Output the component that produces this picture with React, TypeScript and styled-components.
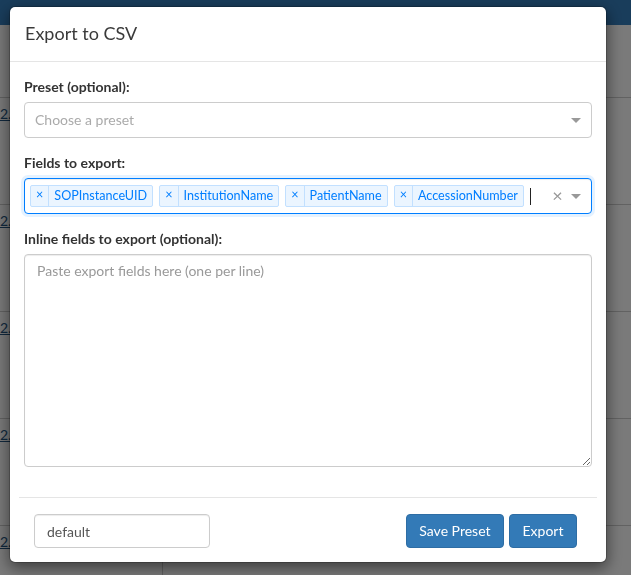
import React from "react";
import styled, { createGlobalStyle } from "styled-components";

const GlobalStyle = createGlobalStyle`
  html, body { margin: 0; padding: 0; }
  body {
    font-family: Lato, "Noto Sans", sans-serif;
    font-size: 14px;
    color: #333;
    background: #f4f4f4;
    overflow: hidden;
  }
  * { box-sizing: border-box; }
`;

const Page = styled.div`
  width: 631px;
  height: 575px;
  overflow: hidden;
`;

const NavBar = styled.div`
  height: 25px;
  background: #337ab7;
`;

const Table = styled.div`
  display: flex;
  flex-direction: column;
  padding-top: 72px;
`;

const Row = styled.div`
  display: grid;
  grid-template-columns: 162px 1fr;
  height: 107px;
  border-top: 1px solid #c4c4c4;
`;

const Cell = styled.div<{ $divider?: boolean }>`
  padding: 6px 0 0 0;
  font-size: 14px;
  color: #333;
  border-left: ${(p) => (p.$divider ? "1px solid #c4c4c4" : "none")};
  white-space: nowrap;
  overflow: hidden;
  line-height: 20px;
  & a { color: #23527c; text-decoration: underline; }
`;

const Backdrop = styled.div`
  position: fixed;
  inset: 0;
  background: rgba(0, 0, 0, 0.5);
`;

const Dialog = styled.div`
  position: absolute;
  left: 9px;
  top: 6px;
  width: 598px;
  background: #fff;
  border: 1px solid rgba(0, 0, 0, 0.2);
  border-radius: 6px;
  box-shadow: 0 5px 15px rgba(0, 0, 0, 0.5);
  background-clip: padding-box;
`;

const Header = styled.div`
  height: 55px;
  padding: 0 15px;
  display: flex;
  align-items: center;
  border-bottom: 1px solid #e5e5e5;
`;

const Title = styled.h4`
  margin: 0;
  font-size: 18px;
  font-weight: 400;
  color: #3a3a3a;
  line-height: 1.42857;
  padding-bottom: 1px;
`;

const Body = styled.div`
  padding: 15px 14px 30px 14px;
`;

const Group = styled.div`
  margin-bottom: 15px;
  &:last-child { margin-bottom: 0; }
`;

const Label = styled.label`
  display: block;
  font-weight: 700;
  font-size: 14px;
  line-height: 20px;
  margin-bottom: 5px;
  color: #333;
`;

const Control = styled.div<{ $focused?: boolean }>`
  display: flex;
  align-items: center;
  min-height: 36px;
  border: 1px solid ${(p) => (p.$focused ? "#007eff" : "#ccc")};
  border-radius: 4px;
  background: #fff;
  box-shadow: ${(p) =>
    p.$focused
      ? "inset 0 1px 1px rgba(0,0,0,.075), 0 0 0 3px rgba(0,126,255,.1)"
      : "none"};
`;

const Placeholder = styled.div`
  flex: 1;
  padding-left: 10px;
  color: #aaa;
  font-size: 14px;
  line-height: 34px;
`;

const TagsWrap = styled.div`
  display: flex;
  flex-wrap: nowrap;
  align-items: flex-start;
  padding-top: 1px;
  padding-bottom: 4px;
  align-self: flex-start;
`;

const Tag = styled.div`
  display: flex;
  margin-left: 5px;
  margin-top: 5px;
  background: #ebf5ff;
  border: 1px solid #c2e0ff;
  border-radius: 2px;
  color: #007eff;
  font-size: 12.6px;
  line-height: 18px;
  &:not(:first-child) { margin-left: 6px; }
`;

const TagIcon = styled.span`
  border-right: 1px solid #c2e0ff;
  padding: 0 5px 2px;
  font-size: 12.6px;
`;

const TagLabel = styled.span`
  padding: 1px 5px;
`;

const Caret = styled.div`
  width: 1px;
  height: 17px;
  background: #222;
  margin-left: 6px;
`;

const Spacer = styled.div`
  flex: 1;
`;

const ClearZone = styled.span`
  width: 17px;
  color: #999;
  font-size: 18px;
  line-height: 1;
  text-align: center;
  padding-bottom: 2px;
`;

const ArrowZone = styled.span`
  width: 25px;
  padding-right: 5px;
  display: flex;
  justify-content: center;
`;

const Arrow = styled.span`
  border-color: #999 transparent transparent;
  border-style: solid;
  border-width: 5px 5px 2.5px;
  width: 0;
  height: 0;
  margin-top: 3px;
`;

const TextArea = styled.textarea`
  display: block;
  width: 100%;
  height: 213px;
  padding: 6px 12px;
  border: 1px solid #ccc;
  border-radius: 4px;
  font-family: Lato, "Noto Sans", sans-serif;
  font-size: 14px;
  line-height: 20px;
  color: #555;
  box-shadow: inset 0 1px 1px rgba(0, 0, 0, 0.075);
  &::placeholder { color: #999; }
`;

const Footer = styled.div`
  margin: 0 9px;
  border-top: 1px solid #e5e5e5;
  padding: 16px 20px 14px 15px;
  display: flex;
  align-items: center;
`;

const NameInput = styled.input`
  width: 176px;
  height: 34px;
  padding: 6px 12px;
  border: 1px solid #ccc;
  border-radius: 4px;
  font-family: Lato, "Noto Sans", sans-serif;
  font-size: 14px;
  color: #555;
  box-shadow: inset 0 1px 1px rgba(0, 0, 0, 0.075);
`;

const Buttons = styled.div`
  margin-left: auto;
  display: flex;
  gap: 5px;
`;

const Button = styled.button`
  height: 34px;
  padding: 6px 12.5px;
  background: #337ab7;
  border: 1px solid #2e6da4;
  border-radius: 4px;
  color: #fff;
  font-family: Lato, "Noto Sans", sans-serif;
  font-size: 14px;
  line-height: 20px;
`;

const fields = ["SOPInstanceUID", "InstitutionName", "PatientName", "AccessionNumber"];

export default function App() {
  return (
    <>
      <GlobalStyle />
      <Page>
        <NavBar />
        <Table>
          {[0, 1, 3, 4, 5].map((i) => (
            <Row key={i}>
              <Cell>
                <a>2.1</a>
              </Cell>
              <Cell $divider />
            </Row>
          ))}
        </Table>
        <Backdrop>
          <Dialog>
            <Header>
              <Title>Export to CSV</Title>
            </Header>
            <Body>
              <Group>
                <Label>Preset (optional):</Label>
                <Control>
                  <Placeholder>Choose a preset</Placeholder>
                  <ArrowZone>
                    <Arrow />
                  </ArrowZone>
                </Control>
              </Group>
              <Group>
                <Label>Fields to export:</Label>
                <Control $focused>
                  <TagsWrap>
                    {fields.map((f) => (
                      <Tag key={f}>
                        <TagIcon>×</TagIcon>
                        <TagLabel>{f}</TagLabel>
                      </Tag>
                    ))}
                  </TagsWrap>
                  <Caret />
                  <Spacer />
                  <ClearZone>×</ClearZone>
                  <ArrowZone>
                    <Arrow />
                  </ArrowZone>
                </Control>
              </Group>
              <Group>
                <Label>Inline fields to export (optional):</Label>
                <TextArea placeholder="Paste export fields here (one per line)" />
              </Group>
            </Body>
            <Footer>
              <NameInput defaultValue="default" />
              <Buttons>
                <Button>Save Preset</Button>
                <Button>Export</Button>
              </Buttons>
            </Footer>
          </Dialog>
        </Backdrop>
      </Page>
    </>
  );
}
